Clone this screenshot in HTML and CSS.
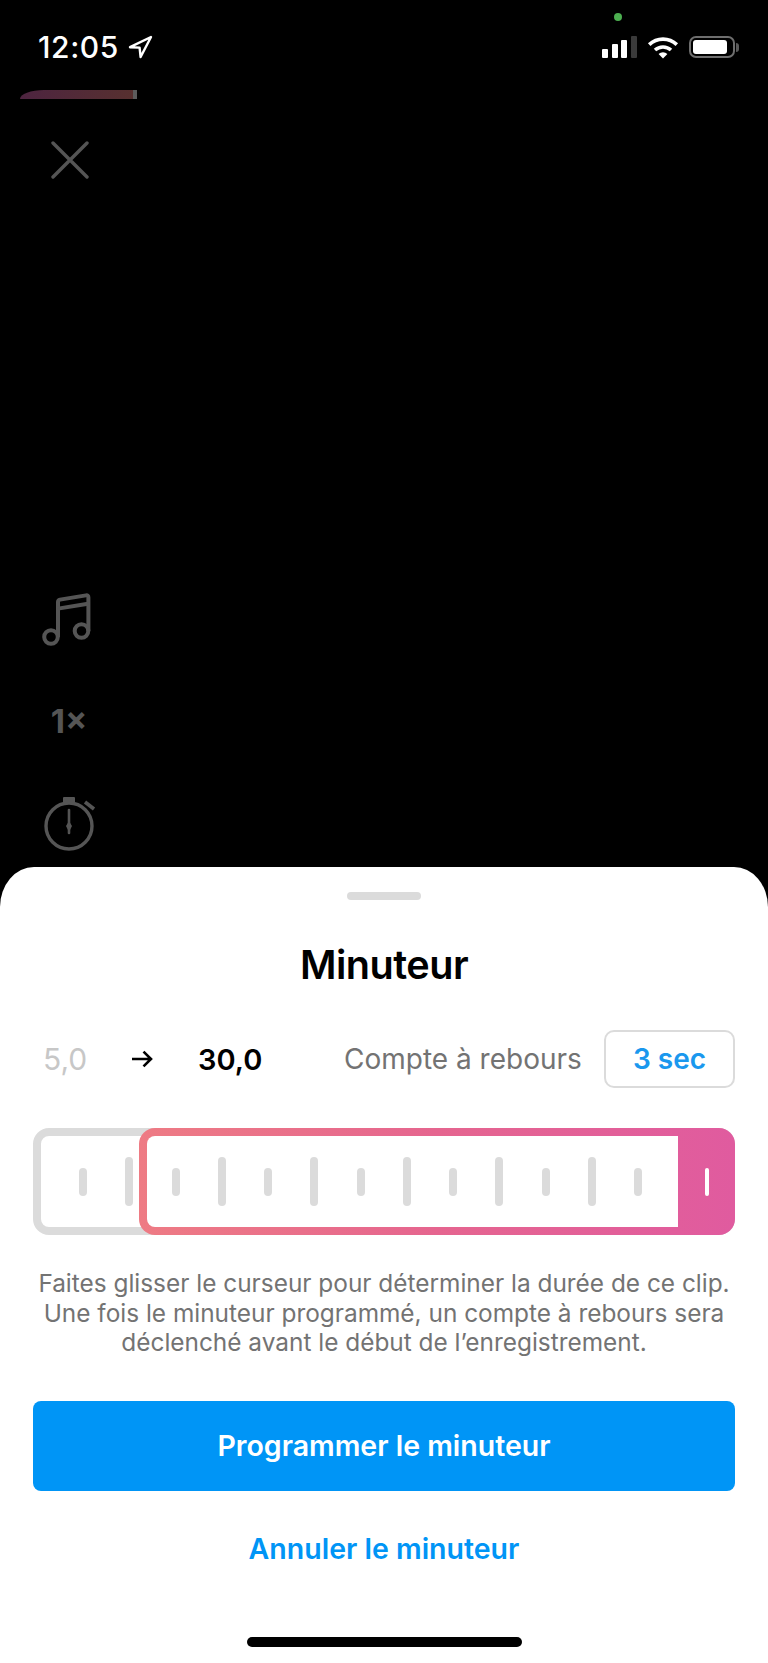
FILE: index.html
```html
<!DOCTYPE html>
<html lang="fr">
  <head>
    <meta charset="UTF-8" />
    <meta name="viewport" content="width=device-width, initial-scale=1.0" />
    <title>Minuteur</title>
    <link rel="stylesheet" href="styles.css">
  </head>
  <body>
    <div class="screen">
      <div class="camera">
        <span class="mic-dot"></span>
        <div class="status">
          <div class="status-left">
            <span class="time">12:05</span>
            <svg class="location" width="26" height="24" viewBox="0 0 26 24">
              <path d="M23 2 L2 12.2 L11.6 12.6 L12.6 22 Z" fill="none" stroke="#fff" stroke-width="2.4" stroke-linejoin="round" />
            </svg>
          </div>
          <div class="status-right">
            <div class="signal">
              <span class="bar bar-1"></span>
              <span class="bar bar-2"></span>
              <span class="bar bar-3"></span>
              <span class="bar bar-4"></span>
            </div>
            <svg class="wifi" width="32" height="23" viewBox="0 0 32 23">
              <path d="M2.2 8.6 A20 20 0 0 1 29.8 8.6" fill="none" stroke="#fff" stroke-width="3.6" />
              <path d="M8 14 A12 12 0 0 1 24 14" fill="none" stroke="#fff" stroke-width="3.6" />
              <path d="M11.6 18 A6.4 6.4 0 0 1 20.4 18 L16 22.6 Z" fill="#fff" />
            </svg>
            <div class="battery">
              <div class="battery-body"><span class="battery-level"></span></div>
              <span class="battery-nub"></span>
            </div>
          </div>
        </div>
        <div class="clip-bar"></div>
        <svg class="close" width="38" height="38" viewBox="0 0 38 38">
          <path d="M2 2 L36 36 M36 2 L2 36" fill="none" stroke="#555" stroke-width="3.4" stroke-linecap="round" />
        </svg>
        <div class="rail">
          <svg class="music" width="50" height="54" viewBox="0 0 50 54">
            <circle cx="9" cy="44" r="6.8" fill="none" stroke="#555" stroke-width="4" />
            <circle cx="39.5" cy="38" r="6.8" fill="none" stroke="#555" stroke-width="4" />
            <path d="M16 44 V9 Q16 7 18 6.6 L44 2.4 Q46.4 2 46.4 4.4 V38" fill="none" stroke="#555" stroke-width="4" stroke-linejoin="round" />
            <path d="M16 15.6 L46 10.8" fill="none" stroke="#555" stroke-width="4" />
          </svg>
          <span class="speed">1×</span>
          <svg class="timer" width="54" height="54" viewBox="0 0 54 54">
            <circle cx="27" cy="29" r="23" fill="none" stroke="#555" stroke-width="3.4" />
            <rect x="21" y="0" width="12" height="6" rx="1" fill="#555" />
            <path d="M43 5 L52 12" fill="none" stroke="#555" stroke-width="3.6" />
            <path d="M27 13 V36" fill="none" stroke="#555" stroke-width="2.6" stroke-linecap="round" />
            <path d="M27 24 L30 29 L27 35 L24 29 Z" fill="#555" />
          </svg>
        </div>
      </div>

      <div class="sheet">
        <div class="handle"></div>
        <h2 class="sheet-title">Minuteur</h2>
        <div class="duration-row">
          <span class="range-start">5,0</span>
          <svg class="range-arrow" width="22" height="18" viewBox="0 0 22 18">
            <path d="M1 9 H20 M12.5 1.6 L20 9 L12.5 16.4" fill="none" stroke="#000" stroke-width="2.6" />
          </svg>
          <span class="range-end">30,0</span>
          <span class="countdown-label">Compte à rebours</span>
          <button class="countdown-btn">3 sec</button>
        </div>
        <div class="slider">
          <div class="selection">
            <div class="selection-inner"></div>
            <div class="selection-grip"><span class="grip-line"></span></div>
          </div>
          <div class="ticks">
            <span class="tick"></span>
            <span class="tick tick-tall"></span>
            <span class="tick"></span>
            <span class="tick tick-tall"></span>
            <span class="tick"></span>
            <span class="tick tick-tall"></span>
            <span class="tick"></span>
            <span class="tick tick-tall"></span>
            <span class="tick"></span>
            <span class="tick tick-tall"></span>
            <span class="tick"></span>
            <span class="tick tick-tall"></span>
            <span class="tick"></span>
          </div>
        </div>
        <p class="help">Faites glisser le curseur pour déterminer la durée de ce clip.<br>Une fois le minuteur programmé, un compte à rebours sera<br>déclenché avant le début de l’enregistrement.</p>
        <button class="primary-btn">Programmer le minuteur</button>
        <button class="link-btn">Annuler le minuteur</button>
        <div class="home-bar"></div>
      </div>
    </div>
  </body>
</html>
```

FILE: styles.css
```css
/* Base */
body {
  margin: 0;
  padding: 0;
  background-color: #000;
  font-family: "Inter", "Liberation Sans", sans-serif;
}
button {
  font-family: inherit;
  cursor: pointer;
}
.screen {
  width: 768px;
  height: 1663px;
  display: flex;
  flex-direction: column;
  overflow: hidden;
}

/* Camera behind the sheet */
.camera {
  height: 867px;
  display: flex;
  flex-direction: column;
  position: relative;
  flex-shrink: 0;
}
.mic-dot {
  position: absolute;
  left: 614px;
  top: 13px;
  width: 8px;
  height: 8px;
  border-radius: 50%;
  background-color: #4caf50;
}
.status {
  display: flex;
  justify-content: space-between;
  align-items: flex-start;
  padding: 35px 29px 0 38px;
  height: 24px;
}
.status-left {
  display: flex;
  align-items: center;
  gap: 9px;
}
.time {
  color: #fff;
  font-size: 30px;
  font-weight: 500;
  line-height: 24px;
  letter-spacing: 0.6px;
}
.status-right {
  display: flex;
  align-items: flex-start;
  gap: 10px;
  padding-top: 1px;
}
.signal {
  display: flex;
  align-items: flex-end;
  gap: 3.6px;
  height: 22px;
}
.bar {
  width: 6px;
  border-radius: 1px;
  background-color: #fff;
}
.bar-1 { height: 9px; }
.bar-2 { height: 14px; }
.bar-3 { height: 18px; }
.bar-4 { height: 22px; background-color: #3a3a3a; }
.battery {
  display: flex;
  align-items: center;
  gap: 1px;
  height: 22px;
}
.battery-body {
  width: 46px;
  height: 22px;
  box-sizing: border-box;
  border: 2px solid #6e6e6e;
  border-radius: 7px;
  padding: 2px;
}
.battery-level {
  display: block;
  width: 34px;
  height: 14px;
  border-radius: 3px;
  background-color: #fff;
}
.battery-nub {
  width: 3px;
  height: 9px;
  border-radius: 0 3px 3px 0;
  background-color: #5a5a5a;
}
.clip-bar {
  width: 113px;
  height: 9px;
  margin: 31px 0 0 20px;
  border-right: 4px solid #5c5c5c;
  border-radius: 24px 0 0 0 / 9px 0 0 0;
  background: linear-gradient(90deg, #4d2440, #57302f);
}
.close {
  margin: 42px 0 0 51px;
}
.rail {
  margin-top: auto;
  margin-left: 42px;
  width: 54px;
  padding-bottom: 16px;
  display: flex;
  flex-direction: column;
  align-items: center;
}
.music {
  margin-right: 4px;
}
.speed {
  margin-top: 50px;
  margin-bottom: 52px;
  color: #555;
  font-size: 33px;
  font-weight: 700;
  line-height: 48px;
}

/* Bottom sheet */
.sheet {
  flex: 1;
  display: flex;
  flex-direction: column;
  align-items: center;
  background-color: #fff;
  border-radius: 34px 34px 0 0 / 40px 40px 0 0;
  padding: 0 33px;
}
.handle {
  width: 74px;
  height: 8px;
  margin-top: 25px;
  border-radius: 4px;
  background-color: #dbdbdb;
}
.sheet-title {
  margin: 41px 0 0;
  color: #000;
  font-size: 39.6px;
  font-weight: 600;
  line-height: 48px;
  letter-spacing: -0.5px;
}
.duration-row {
  align-self: stretch;
  display: flex;
  align-items: center;
  margin-top: 41px;
  padding-left: 10px;
}
.range-start {
  width: 88px;
  color: #c7c7c7;
  font-size: 30px;
}
.range-arrow {
  width: 22px;
}
.range-end {
  width: 146px;
  margin-left: 45px;
  color: #000;
  font-size: 29px;
  font-weight: 600;
}
.countdown-label {
  flex: 1;
  color: #737373;
  font-size: 28px;
  white-space: nowrap;
}
.countdown-btn {
  width: 131px;
  height: 58px;
  padding: 0;
  background-color: #fff;
  border: 2px solid #dbdbdb;
  border-radius: 10px;
  color: #1a98ee;
  font-size: 28px;
  font-weight: 600;
}

/* Trim slider */
.slider {
  align-self: stretch;
  height: 107px;
  margin-top: 40px;
  box-sizing: border-box;
  border: 8px solid #dbdbdb;
  border-radius: 16px;
  display: flex;
  align-items: center;
  position: relative;
}
.selection {
  position: absolute;
  left: 98px;
  top: -8px;
  right: -8px;
  bottom: -8px;
  box-sizing: border-box;
  padding: 8px 0 8px 8px;
  display: flex;
  border-radius: 16px;
  background: linear-gradient(90deg, #ee7b84 0%, #e5658f 50%, #e05b9f 100%);
}
.selection-inner {
  flex: 1;
  border-radius: 8px 0 0 8px;
  background-color: #fff;
}
.selection-grip {
  width: 57px;
  display: flex;
  align-items: center;
  justify-content: center;
}
.grip-line {
  width: 4px;
  height: 28px;
  margin-left: 1px;
  border-radius: 2px;
  background-color: #fff;
}
.ticks {
  display: flex;
  align-items: center;
  gap: 38.25px;
  padding-left: 38px;
  position: relative;
}
.tick {
  width: 8px;
  height: 28px;
  border-radius: 4px;
  background-color: #dbdbdb;
}
.tick-tall {
  height: 49px;
}

/* Text and actions */
.help {
  margin: 34px 0 0;
  color: #737373;
  font-size: 24.4px;
  line-height: 29.5px;
  text-align: center;
  white-space: nowrap;
}
.primary-btn {
  align-self: stretch;
  height: 90px;
  margin-top: 43px;
  padding: 0;
  border: none;
  border-radius: 8px;
  background-color: #0095f6;
  color: #fff;
  font-size: 28.5px;
  font-weight: 600;
}
.link-btn {
  margin-top: 35px;
  height: 46px;
  padding: 0;
  border: none;
  background: none;
  color: #0095f6;
  font-size: 28.5px;
  font-weight: 600;
}
.home-bar {
  width: 275px;
  height: 10px;
  margin-top: 65px;
  border-radius: 5px;
  background-color: #000;
}
```
